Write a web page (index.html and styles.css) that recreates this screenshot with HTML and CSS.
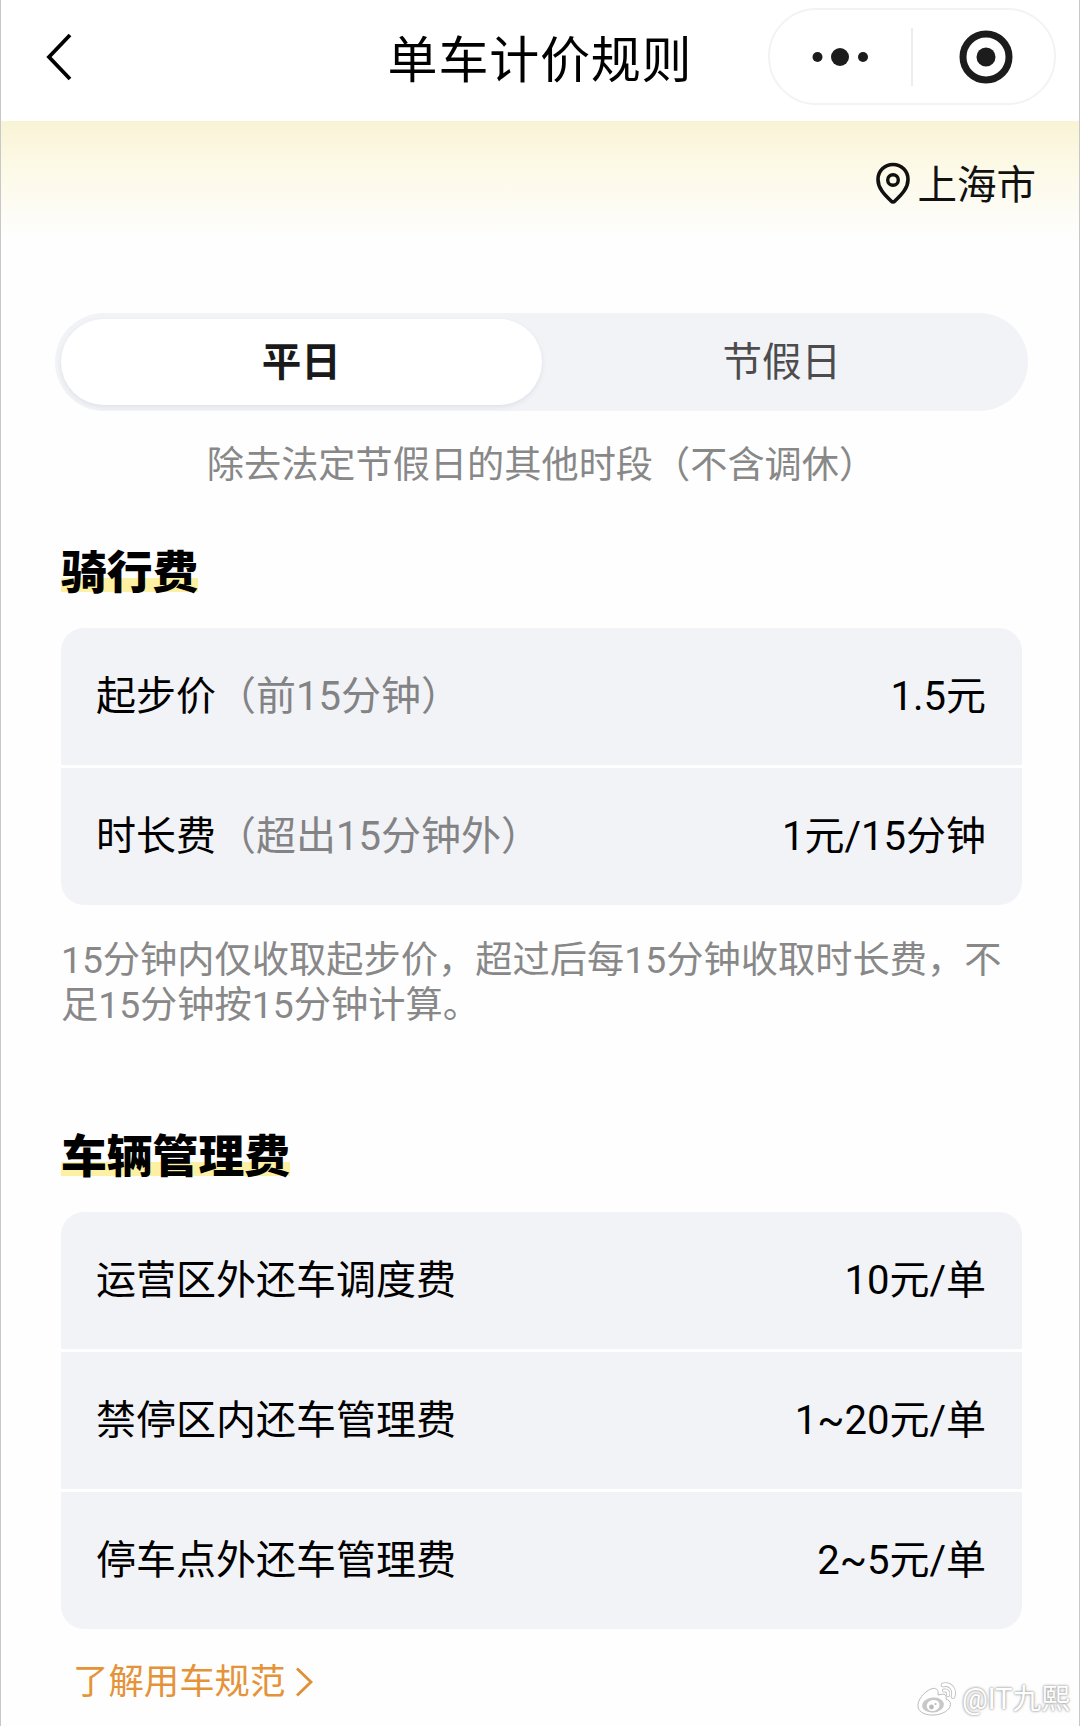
FILE: index.html
```html
<!DOCTYPE html>
<html lang="zh-CN">
<head>
    <meta charset="UTF-8">
    <meta name="viewport" content="width=device-width, initial-scale=1.0">
    <title>单车计价规则</title>
    <link rel="stylesheet" href="styles.css">
</head>
<body>
    <header class="navbar">
        <svg class="back" width="30" height="50" viewBox="0 0 30 50">
            <path d="M25 3 L4 25 L25 47" fill="none" stroke="#000" stroke-width="3.8"/>
        </svg>
        <h1>单车计价规则</h1>
        <div class="capsule">
            <svg class="dots" width="58" height="20" viewBox="0 0 58 20">
                <circle cx="6.5" cy="10" r="5"/>
                <circle cx="29" cy="10" r="9"/>
                <circle cx="52" cy="10" r="5"/>
            </svg>
            <span class="line"></span>
            <svg class="ring" width="54" height="54" viewBox="0 0 54 54">
                <circle cx="27" cy="27" r="23" fill="none" stroke="#1c1c1c" stroke-width="7"/>
                <circle cx="27" cy="27" r="9.5"/>
            </svg>
        </div>
    </header>

    <main>
        <div class="city">
            <svg width="36" height="44" viewBox="0 0 36 44">
                <path d="M18 3.5 C9.5 3.5 3 10 3 18.5 C3 28 10.5 34.5 16 40 Q18 42 20 40 C25.5 34.5 33 28 33 18.5 C33 10 26.5 3.5 18 3.5 Z" fill="none" stroke="#111" stroke-width="3.6"/>
                <circle cx="18" cy="19" r="5.3" fill="none" stroke="#111" stroke-width="3.4"/>
            </svg>
            <span>上海市</span>
        </div>

        <div class="tabs">
            <div class="tab active">平日</div>
            <div class="tab">节假日</div>
        </div>
        <p class="tip">除去法定节假日的其他时段（不含调休）</p>

        <section>
            <h2>骑行费</h2>
            <div class="card">
                <div class="row"><span>起步价<em>（前15分钟）</em></span><span>1.5元</span></div>
                <div class="row"><span>时长费<em>（超出15分钟外）</em></span><span>1元/15分钟</span></div>
            </div>
            <p class="note">15分钟内仅收取起步价，超过后每15分钟收取时长费，不足15分钟按15分钟计算。</p>
        </section>

        <section>
            <h2>车辆管理费</h2>
            <div class="card">
                <div class="row"><span>运营区外还车调度费</span><span>10元/单</span></div>
                <div class="row"><span>禁停区内还车管理费</span><span>1~20元/单</span></div>
                <div class="row"><span>停车点外还车管理费</span><span>2~5元/单</span></div>
            </div>
        </section>

        <a class="more">了解用车规范
            <svg width="20" height="32" viewBox="0 0 20 32">
                <path d="M3 2.5 L17 16 L3 29.5" fill="none" stroke="#e08f33" stroke-width="2.8"/>
            </svg>
        </a>
    </main>

    <div class="watermark">
        <svg width="42" height="36" viewBox="0 0 42 36">
            <path d="M15 8 C8 11 1 19 2 26 C3 32 11 34.5 18 34 C27 33.5 34 29 34.5 23.5 C34.5 20 32 19 30 18 C31 14 29 12 22 14 C23 9 20 6 15 8 Z" fill="#fff" stroke="#bbb" stroke-width="1"/>
            <ellipse cx="17" cy="24" rx="11" ry="7.5" fill="#c8c8c8" transform="rotate(-6 17 24)"/>
            <ellipse cx="17" cy="24.5" rx="6.5" ry="5.5" fill="#fff" transform="rotate(-15 17 24)"/>
            <circle cx="15.5" cy="26" r="2.4" fill="#bbb"/>
            <circle cx="19.5" cy="23" r="1.1" fill="#bbb"/>
            <path d="M27 4 C34 2 39.5 8 37 15.5" fill="none" stroke="#bbb" stroke-width="4.6" stroke-linecap="round"/>
            <path d="M27 4 C34 2 39.5 8 37 15.5" fill="none" stroke="#fff" stroke-width="3" stroke-linecap="round"/>
            <path d="M28 9.5 C31 9 33 11 32 14" fill="none" stroke="#bbb" stroke-width="4" stroke-linecap="round"/>
            <path d="M28 9.5 C31 9 33 11 32 14" fill="none" stroke="#fff" stroke-width="2.4" stroke-linecap="round"/>
        </svg>
        <span>@IT九熙</span>
    </div>
</body>
</html>
```
FILE: styles.css
```css
* {
    box-sizing: border-box;
    margin: 0;
    padding: 0;
}

body {
    position: relative;
    height: 1726px;
    overflow: hidden;
    background: #fefefe;
    border-left: 1px solid #c8c8c8;
    border-right: 1px solid #c8c8c8;
    font-family: Roboto, "Noto Sans CJK SC", sans-serif;
    color: #000;
}

.navbar {
    display: grid;
    grid-template-columns: 1fr auto 1fr;
    align-items: center;
    height: 121px;
    padding: 0 23px 8px;
    background: #fff;
}

.back {
    margin-left: 21px;
}

.navbar h1 {
    padding-top: 8px;
    font-size: 50px;
    font-weight: 400;
    line-height: 60px;
    letter-spacing: 0.8px;
}

.capsule {
    justify-self: end;
    display: flex;
    align-items: center;
    width: 288px;
    height: 97px;
    border: 2px solid #f3f3f3;
    border-radius: 49px;
    fill: #1c1c1c;
}

.dots {
    margin-left: 41px;
}

.capsule .line {
    width: 2px;
    height: 58px;
    margin-left: 42px;
    background: #ededed;
}

.ring {
    margin-left: 46px;
}

main {
    padding: 0 57px 0 60px;
    background: linear-gradient(#f9f3d5, #fcf9e6 45px, #fefefe 118px);
}

.city {
    display: flex;
    justify-content: flex-end;
    align-items: center;
    height: 192px;
    margin-right: -14px;
    padding-bottom: 68px;
    font-size: 39.5px;
    color: #111;
}

.city span {
    margin-left: 7px;
    padding-bottom: 4px;
}

.tabs {
    display: flex;
    width: 973px;
    height: 98px;
    margin-left: -6px;
    padding: 6px;
    border-radius: 49px;
    background: #f2f3f7;
}

.tab {
    flex: 1;
    border-radius: 43px;
    line-height: 88px;
    font-size: 39.5px;
    text-align: center;
    color: #4c4c4e;
}

.tab.active {
    background: #fff;
    box-shadow: 0 2px 5px rgba(40, 50, 80, 0.09);
    font-weight: bold;
    color: #1a1a1a;
}

.tip {
    margin-top: 29px;
    font-size: 37.2px;
    line-height: 50px;
    text-align: center;
    color: #888;
}

h2 {
    display: table;
    font-size: 45.8px;
    font-weight: 900;
    line-height: 60px;
    /* yellow marker behind the title */
    background: linear-gradient(#fdf0a2, #fdf0a2) 0 34px / 100% 14px no-repeat;
}

section h2 {
    margin-top: 54px;
}

section + section h2 {
    margin-top: 100px;
}

.card {
    width: 961px;
    margin-top: 24px;
    border-radius: 23px;
    background: #f2f3f7;
}

.row {
    display: flex;
    justify-content: space-between;
    height: 137px;
    padding: 0 36px 0 35px;
    font-size: 40px;
    line-height: 138px;
}

.row + .row {
    height: 140px;
    border-top: 3px solid #fff;
}

.row em {
    font-style: normal;
    color: #838385;
}

.note {
    width: 961px;
    margin-top: 33px;
    font-size: 37.25px;
    line-height: 45px;
    color: #888;
}

.more {
    display: flex;
    align-items: center;
    width: max-content;
    margin: 29px 0 0 12px;
    font-size: 35.4px;
    line-height: 48px;
    color: #e59338;
}

.more svg {
    margin-left: 9px;
}

.watermark {
    position: absolute;
    right: 9px;
    bottom: 8px;
    display: flex;
    align-items: center;
    gap: 4px;
    font-size: 28.8px;
    line-height: 38px;
    color: #fff;
    text-shadow: 0 0 3px #999, 0 0 2px #aaa;
}
```
